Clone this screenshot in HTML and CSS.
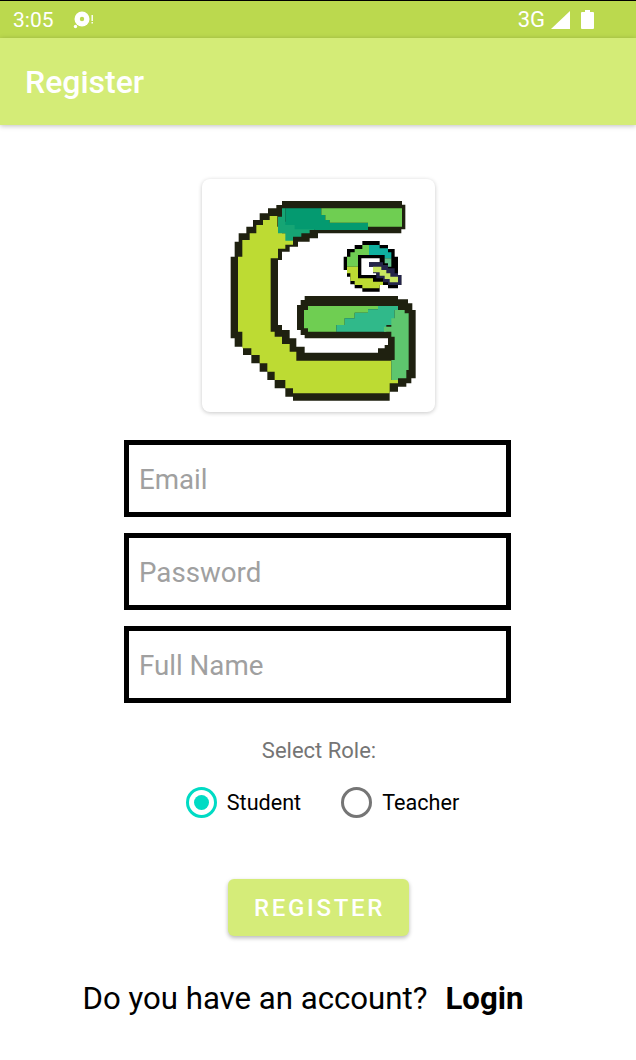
FILE: index.html
```html
<!DOCTYPE html>
<html lang="en">
<head>
<meta charset="utf-8">
<title>Register</title>
<link rel="stylesheet" href="styles.css">
</head>
<body>
<div class="status-bar">
  <div class="status-left">
    <span class="clock">3:05</span>
    <svg class="disc" width="22" height="20" viewBox="0 0 22 20">
      <circle cx="9" cy="9" r="7.5" fill="#fff"/>
      <circle cx="9" cy="9" r="2.2" fill="#bbd94e"/>
      <circle cx="2.5" cy="16.5" r="1.7" fill="#fff"/>
      <rect x="18.5" y="5" width="1.4" height="6" fill="#fff"/>
      <rect x="18.5" y="12" width="1.4" height="1.5" fill="#fff"/>
    </svg>
  </div>
  <div class="status-right">
    <span class="net">3G</span>
    <svg class="signal" width="19" height="18" viewBox="0 0 19 18"><path d="M19 0V18H0Z" fill="#fff"/></svg>
    <svg class="battery" width="13" height="19" viewBox="0 0 13 19"><path d="M4 0H9V2H12A1 1 0 0 1 13 3V18A1 1 0 0 1 12 19H1A1 1 0 0 1 0 18V3A1 1 0 0 1 1 2H4Z" fill="#fff"/></svg>
  </div>
</div>
<header class="toolbar">Register</header>
<main class="content">
  <div class="logo-card">
    <svg class="logo" width="233" height="233" viewBox="22 27 699 699">
      <path fill="#1f2110" d="M262 93H622V104H632V178H620V190H370V205H345V215H310V230H285V245H262V270H250V465H262V480H285V505H305V530H330V548H550V535H570V525H580V505H330V495H318V480H307V405H318V390H330V378H610V388H640V400H653V420H663V625H650V640H635V650H610V665H585V692H295V680H272V655H240V630H218V605H195V580H170V555H145V530H120V505H108V260H120V215H132V190H155V170H175V150H195V130H220V115H245V105H262Z"/>
      <path fill="#bddb33" d="M248 138V170H262V190H295V224H272V236H250V265H228V485H240V500H262V522H285V545H305V572H590V630H610V640H585V670H295V655H272V630H240V605H218V580H195V555H170V535H143V485H130V260H143V210H165V190H185V165H205V150H225V138Z"/>
      <path fill="#16a574" d="M262 115H272V155H360V180H345V190H320V200H295V212H272V190H250V140H262Z"/>
      <path fill="#049a70" d="M272 115H380V135H392V150H405V158H520V180H360V178H300V165H272Z"/>
      <path fill="#6fce52" d="M380 115H622V170H520V158H405V150H392V135H380Z"/>
      <path fill="#6fce52" d="M340 408H550V418H520V428H480V445H450V465H425V485H340V475H328V420H340Z"/>
      <path fill="#30b98a" d="M550 408H610V420H600V465H575V485H425V465H450V445H480V428H520V418H550Z"/>
      <path fill="#5ec66e" d="M610 420H630V430H642V600H635V625H610V630H590V570H600V500H590V485H568V470H590V445H600V420Z"/>
      <g transform="translate(375 165)">
        <path fill="#000" d="M128 48H180V60H205V72H225V95H235V150H245V180H235V190H205V180H180V200H128V190H105V178H92V155H82V135H72V95H82V72H105V60H128Z"/>
        <path fill="#6fce52" d="M128 60H148V90H115V125H82V95H92V82H105V72H128Z"/>
        <path fill="#0fb0a0" d="M148 60H180V70H205V82H215V100H195V90H148Z"/>
        <path fill="#5fc08a" d="M195 100H215V125H205V115H195Z"/>
        <path fill="#bddb33" d="M82 125H115V160H160V170H190V180H180V190H128V180H105V168H92V145H82Z"/>
        <path fill="#fff" d="M125 100H180V112H148V125H160V140H170V150H125Z"/>
        <path fill="#25254a" d="M148 112H190V120H205V130H225V145H235V150H245V180H205V172H190V160H170V145H160V125H148Z"/>
        <path fill="#c9e660" d="M160 125H185V135H200V145H212V155H235V172H210V162H195V152H180V142H160Z"/>
      </g>
    </svg>
  </div>
  <div class="fields">
    <div class="field">Email</div>
    <div class="field">Password</div>
    <div class="field">Full Name</div>
  </div>
  <p class="role-label">Select Role:</p>
  <div class="role-group">
    <div class="radio">
      <span class="radio-mark is-checked"></span>
      <span class="radio-text">Student</span>
    </div>
    <div class="radio">
      <span class="radio-mark"></span>
      <span class="radio-text">Teacher</span>
    </div>
  </div>
  <div class="primary-button">REGISTER</div>
  <p class="login-row"><span>Do you have an account?</span><strong class="login-link">Login</strong></p>
</main>
</body>
</html>
```
FILE: styles.css
```css
* {
  box-sizing: border-box;
}

html,
body {
  margin: 0;
  padding: 0;
}

body {
  width: 636px;
  height: 1060px;
  overflow: hidden;
  background: #fff;
  font-family: Roboto, "Liberation Sans", sans-serif;
}

.status-bar {
  height: 38px;
  border-top: 1px solid #000;
  background: #bbd94e;
  color: #fff;
  display: flex;
  align-items: center;
  justify-content: space-between;
  padding: 0 42px 0 13px;
}

.status-left,
.status-right {
  display: flex;
  align-items: center;
}

.clock {
  font-size: 21px;
  line-height: 24px;
}

.disc {
  margin-left: 19px;
}

.net {
  font-size: 22px;
  line-height: 24px;
}

.signal {
  margin-left: 6px;
}

.battery {
  margin-left: 11px;
}

.toolbar {
  height: 87px;
  background: #d4ec77;
  color: #fff;
  font-size: 32px;
  font-weight: 500;
  line-height: 89px;
  padding-left: 25px;
  box-shadow: 0 1px 5px rgba(0, 0, 0, 0.25);
  position: relative;
}

.content {
  display: flex;
  flex-direction: column;
  align-items: center;
  padding-top: 54px;
}

.logo-card {
  width: 233px;
  height: 233px;
  border-radius: 8px;
  background: #fff;
  box-shadow: 0 1px 4px rgba(0, 0, 0, 0.22);
  margin-left: 1px;
  overflow: hidden;
}

.logo {
  display: block;
}

.fields {
  display: flex;
  flex-direction: column;
  gap: 16px;
  margin-top: 28px;
  margin-right: 1px;
}

.field {
  width: 387px;
  height: 77px;
  border: 5px solid #000;
  padding-left: 10px;
  color: #a0a0a0;
  font-size: 27.7px;
  line-height: 69px;
}

.role-label {
  margin: 36px 0 0 2px;
  color: #757575;
  font-size: 22px;
  line-height: 24px;
}

.role-group {
  display: flex;
  gap: 40px;
  margin-top: 24px;
  margin-left: 9px;
}

.radio {
  display: flex;
  align-items: center;
  gap: 10px;
}

.radio-mark {
  width: 31px;
  height: 31px;
  border: 3.5px solid #757575;
  border-radius: 50%;
  display: flex;
  align-items: center;
  justify-content: center;
}

.radio-mark.is-checked {
  border-color: #00dbc4;
}

.radio-mark.is-checked::after {
  content: "";
  width: 15px;
  height: 15px;
  border-radius: 50%;
  background: #00dbc4;
}

.radio-text {
  font-size: 21.6px;
  line-height: 30px;
  color: #000;
}

.primary-button {
  width: 181px;
  height: 57px;
  margin: 61px 0 0 1px;
  padding-left: 2px;
  border-radius: 6px;
  background: #d5ec79;
  color: #fff;
  font-size: 24px;
  font-weight: 500;
  letter-spacing: 2.7px;
  line-height: 59px;
  text-align: center;
  box-shadow: 0 2px 4px rgba(0, 0, 0, 0.28);
}

.login-row {
  display: flex;
  gap: 18px;
  margin: 45px 0 0 -30px;
  color: #000;
  font-size: 31.2px;
  line-height: 36px;
}

.login-link {
  font-weight: 700;
}
```
